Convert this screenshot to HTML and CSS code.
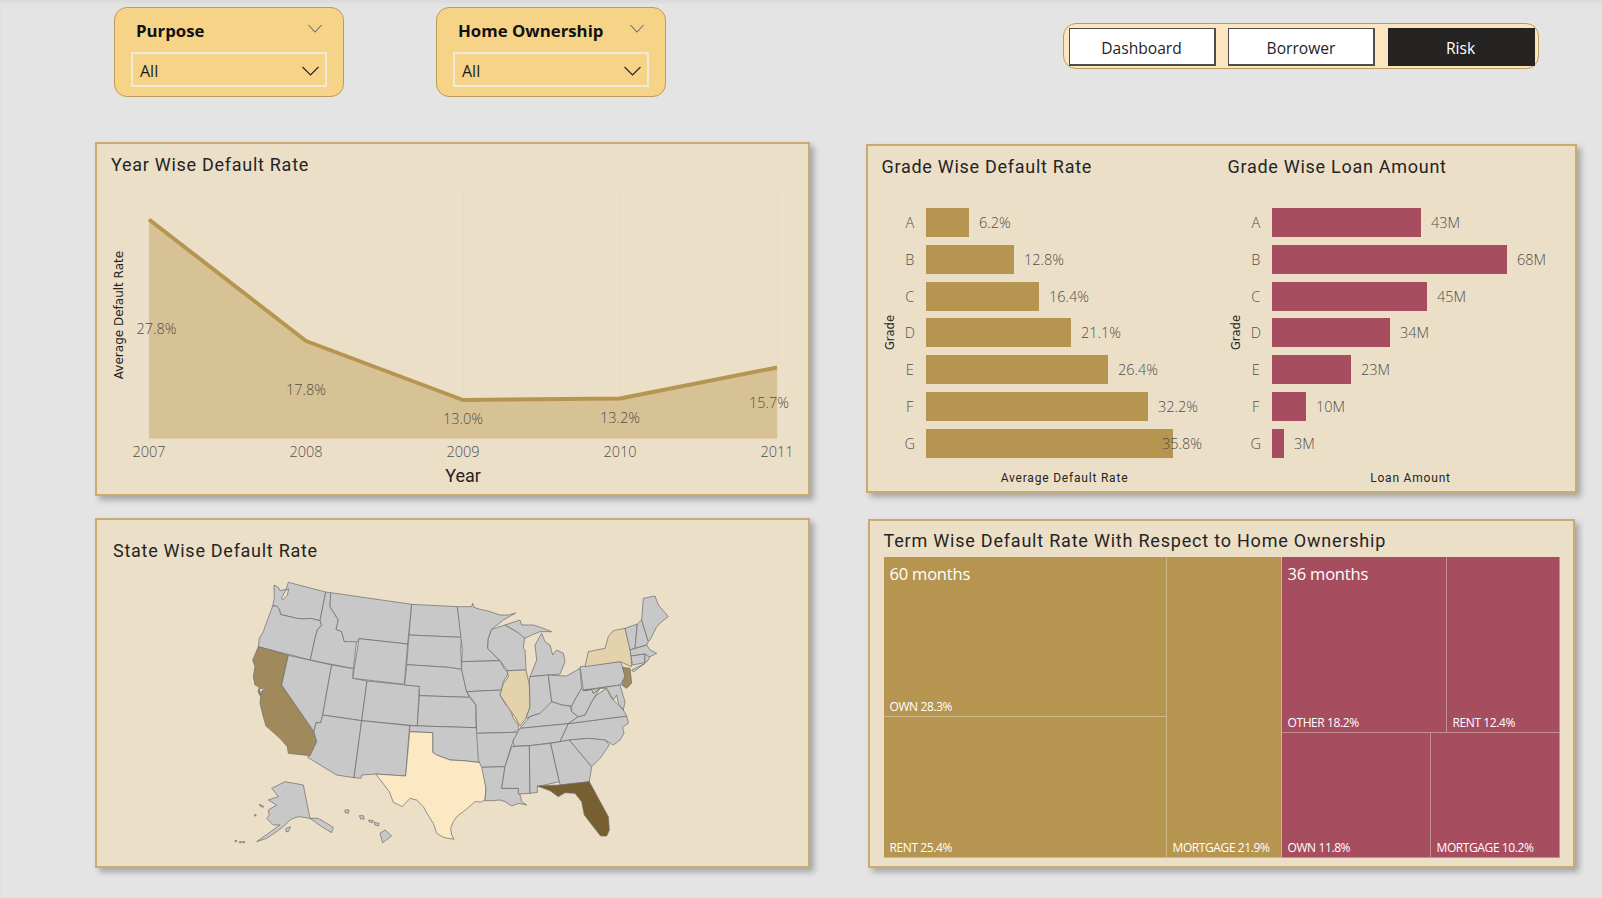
FILE: index.html
```html
<!DOCTYPE html>
<html lang="en">
<head>
<meta charset="utf-8">
<title>Risk</title>
<link rel="stylesheet" href="styles.css">
</head>
<body>
<div class="page">
  <header class="topbar">
    <div class="slicer">
      <div class="slicer-head"><span>Purpose</span>
        <svg class="chev-sm" viewBox="0 0 14 9"><path d="M.5 1 7 8l6.500-7"/></svg></div>
      <div class="slicer-box"><span>All</span>
        <svg class="chev" viewBox="0 0 17 10"><path d="M.5 1 8.500 9l8-8"/></svg></div>
    </div>
    <div class="slicer slicer-second">
      <div class="slicer-head"><span>Home Ownership</span>
        <svg class="chev-sm" viewBox="0 0 14 9"><path d="M.5 1 7 8l6.500-7"/></svg></div>
      <div class="slicer-box"><span>All</span>
        <svg class="chev" viewBox="0 0 17 10"><path d="M.5 1 8.500 9l8-8"/></svg></div>
    </div>
    <nav class="nav">
      <div class="nav-btn">Dashboard</div>
      <div class="nav-btn">Borrower</div>
      <div class="nav-btn nav-active">Risk</div>
    </nav>
  </header>

  <main class="board">
    <div class="col col-left">
      <section class="card card-year">
        <h2 class="title title-year">Year Wise Default Rate</h2>
        <svg class="line-chart" viewBox="98 180 709 313" width="709" height="313">
          <g class="grid">
            <path d="M148.500 195V438M305.500 195V438M462.500 195V438M619.500 195V438M776.500 195V438"/>
          </g>
          <path class="area" d="M148 219.500 305 341 462 400 619 398.500 776 367.500V438.500H148Z"/>
          <path class="line" d="M148 219.500 305 341 462 400 619 398.500 776 367.500"/>
          <text class="val" x="155.500" y="334">27.8%</text>
          <text class="val" x="305" y="395">17.8%</text>
          <text class="val" x="462" y="424">13.0%</text>
          <text class="val" x="619" y="423">13.2%</text>
          <text class="val" x="768" y="408">15.7%</text>
          <text class="val" x="148" y="457">2007</text>
          <text class="val" x="305" y="457">2008</text>
          <text class="val" x="462" y="457">2009</text>
          <text class="val" x="619" y="457">2010</text>
          <text class="val" x="776" y="457">2011</text>
          <text class="axis-year" x="462" y="482">Year</text>
          <text class="axis-y" transform="translate(122 315) rotate(-90)">Average Default Rate</text>
        </svg>
      </section>

      <section class="card card-state">
        <h2 class="title title-state">State Wise Default Rate</h2>
        <svg class="map" viewBox="0 0 1380 870" width="460" height="290">
          <g class="states">
            <path d="M132 45 145 52 150 62 168 58 175 37 287 66 270 152 240 145 222 147 200 145 180 140 152 134 148 118 140 108 128 108 133 85Z"/>
            <path class="hole" d="M166 62 176 56 172 76 158 90 155 84Z"/>
            <path d="M128 108 140 108 148 118 152 134 180 140 200 145 222 147 240 145 270 152 275 165 262 180 255 205 241 270 85 230 88 205 100 185 105 170Z"/>
            <path class="s-ca" d="M85 230 175 256 155 345 250 485 260 515 240 557 175 550 172 530 150 505 108 468 100 440 90 400 92 380 84 365 88 352 75 345 70 320 75 290 68 270Z"/>
            <path class="hole" d="M88 356 108 354 96 362 92 374Z"/>
            <path d="M175 256 305 285 278 435 272 458 258 458 252 485 155 345Z"/>
            <path d="M287 66 302 68 300 110 325 150 318 178 335 185 343 215 380 212 370 296 241 270 255 205 262 180 275 165 270 152Z"/>
            <path d="M302 68 545 103 533 222 387 206 383 215 343 215 335 185 318 178 325 150 300 110Z"/>
            <path d="M387 206 533 222 523 343 368 325Z"/>
            <path d="M305 285 370 296 368 325 411 333 395 452 278 435Z"/>
            <path d="M411 333 568 349 562 468 395 452Z"/>
            <path d="M278 435 395 452 372 623 320 615 233 562 240 557 260 515 252 485 258 458 272 458Z"/>
            <path d="M395 452 539 467 527 618 437 612 395 615 393 625 372 623Z"/>
            <path d="M545 103 682 110 695 202 537 195Z"/>
            <path d="M537 195 695 202 692 235 695 298 655 292 530 284Z"/>
            <path d="M530 284 655 292 695 298 710 365 718 382 568 377 568 349 524 345Z"/>
            <path d="M568 377 718 382 738 405 738 473 562 468Z"/>
            <path d="M539 467 738 473 745 490 755 578 700 572 660 570 620 555 608 547 608 488 539 485Z"/>
            <path class="s-tx" d="M539 485 608 488 608 547 620 555 660 570 700 572 755 578 762 610 768 655 765 690 752 696 735 695 712 715 700 725 682 738 670 755 662 775 665 795 672 808 640 802 620 790 610 760 594 735 580 710 560 690 540 685 517 710 490 697 478 665 455 635 437 612 527 618Z"/>
            <path d="M125 655 165 635 220 645 240 745 222 742 205 740 190 745 180 750 160 770 135 788 110 805 80 815 108 795 150 765 130 765 110 745 118 735 115 720 140 705 115 690 145 680Z"/>
            <path d="M240 745 265 745 290 760 310 772 305 788 292 780 275 770Z"/>
            <path d="M450 790 465 780 485 798 458 818Z"/>
            <path d="M345 720 357 720 355 730 345 728Z"/>
            <path d="M388 737 400 737 403 747 392 747Z"/>
            <path d="M416 750 430 752 428 758 418 756Z"/>
            <path d="M433 757 448 760 445 768 435 765Z"/>
            <path d="M168 775 182 770 175 785 168 785Z"/>
            <path d="M88 703 100 708 100 712 90 708Z"/>
            <path d="M15 811 20 811 20 815 15 815Z"/>
            <path d="M28 815 34 815 34 818 28 818Z"/>
            <path d="M38 815 44 815 44 818 38 818Z"/>
            <path d="M74 734 78 734 78 738 74 738Z"/>
          </g>
          <g class="states" transform="translate(660 0)">
            <path d="M22 110 65 110 68 100 72 112 90 118 110 122 130 128 150 135 175 135 197 129 160 150 125 178 115 205 113 235 130 252 150 272 35 275 37 240Z"/>
            <path d="M35 275 150 272 162 295 175 310 160 335 155 360 50 365 35 300Z"/>
            <path d="M50 365 155 360 150 375 165 400 182 420 190 445 205 465 205 480 190 487 80 490 78 405Z"/>
            <path d="M80 490 190 487 205 487 190 510 180 540 165 590 95 592 85 570Z"/>
            <path d="M95 592 165 590 155 655 205 655 215 695 230 705 205 700 185 708 165 695 150 690 125 692 105 692 108 655Z"/>
            <path d="M125 178 165 165 200 185 225 190 220 235 225 240 228 300 172 302 150 272 113 235 115 205Z"/>
            <path class="s-il" d="M172 302 228 300 238 345 240 410 228 445 210 468 195 440 180 420 150 375 160 340 175 322Z"/>
            <path d="M255 225 275 190 285 215 300 225 308 255 320 240 340 250 345 275 330 312 240 320 260 270Z"/>
            <path d="M165 165 210 150 215 165 250 165 280 175 305 185 270 185 245 195 225 205 200 185Z"/>
            <path d="M238 320 295 315 305 395 285 420 270 430 240 440 228 445 240 410Z"/>
            <path d="M295 315 350 318 390 295 395 355 380 380 365 408 335 405 305 395Z"/>
            <path d="M210 475 240 440 270 430 305 395 335 405 360 408 365 425 385 440 355 461Z"/>
            <path d="M190 510 210 475 355 461 330 515 240 527 190 528Z"/>
            <path d="M355 461 530 438 535 460 518 472 522 490 510 510 490 525 465 510 415 505 360 510 330 515Z"/>
            <path d="M355 461 385 440 405 435 425 395 440 375 470 355 485 385 500 400 520 420 530 438Z"/>
            <path d="M365 408 380 380 395 355 400 362 425 358 430 370 450 355 425 395 405 435 385 440 365 425Z"/>
            <path d="M390 290 510 275 530 310 510 345 400 360Z"/>
            <path class="s-ny" d="M405 290 415 245 465 235 475 200 490 182 525 175 543 245 545 290 510 275Z"/>
            <path class="s-nj" d="M517 292 540 295 545 340 530 355 515 345 525 320Z"/>
            <path d="M400 362 510 345 525 395 520 420 505 400 500 375 490 390 470 355 450 355 430 370 425 358Z"/>
            <path d="M525 175 562 162 555 235 540 240Z"/>
            <path d="M562 162 575 150 595 215 590 225 555 235Z"/>
            <path d="M575 150 580 85 615 78 625 105 655 140 635 155 620 170 600 210 595 215Z"/>
            <path d="M540 240 590 225 600 240 620 250 590 265 585 252 543 258Z"/>
            <path d="M543 258 585 252 585 278 547 285Z"/>
            <path d="M585 252 600 262 590 276 585 278Z"/>
            <path d="M545 300 585 280 550 306Z"/>
            <path d="M185 530 238 527 240 670 205 672 205 655 155 655 165 590Z"/>
            <path d="M238 527 302 520 328 635 262 650 262 667 240 670Z"/>
            <path d="M302 520 358 510 425 590 418 635 330 645 328 635Z"/>
            <path d="M358 510 415 505 465 510 478 525 450 565 425 590Z"/>
            <path class="s-fl" d="M262 648 330 645 418 635 445 685 475 740 478 780 470 798 452 798 430 770 403 735 395 695 375 670 345 668 325 680 300 662Z"/>
          </g>
        </svg>
      </section>
    </div>

    <div class="col col-right">
      <section class="card card-grade">
        <div class="grade-col grade-col-a">
          <h2 class="title">Grade Wise Default Rate</h2>
          <div class="bars-wrap">
            <div class="grade-axis">Grade</div>
            <div class="bars">
              <div class="row"><span class="cat">A</span><div class="bar bar-gold" style="width:43px"></div><span class="v">6.2%</span></div>
              <div class="row"><span class="cat">B</span><div class="bar bar-gold" style="width:88px"></div><span class="v">12.8%</span></div>
              <div class="row"><span class="cat">C</span><div class="bar bar-gold" style="width:113px"></div><span class="v">16.4%</span></div>
              <div class="row"><span class="cat">D</span><div class="bar bar-gold" style="width:145px"></div><span class="v">21.1%</span></div>
              <div class="row"><span class="cat">E</span><div class="bar bar-gold" style="width:182px"></div><span class="v">26.4%</span></div>
              <div class="row"><span class="cat">F</span><div class="bar bar-gold" style="width:222px"></div><span class="v">32.2%</span></div>
              <div class="row"><span class="cat">G</span><div class="bar bar-gold" style="width:247px"></div><span class="v v-over">35.8%</span></div>
            </div>
          </div>
          <div class="axis-x">Average Default Rate</div>
        </div>
        <div class="grade-col grade-col-b">
          <h2 class="title">Grade Wise Loan Amount</h2>
          <div class="bars-wrap">
            <div class="grade-axis">Grade</div>
            <div class="bars">
              <div class="row"><span class="cat">A</span><div class="bar bar-rose" style="width:149px"></div><span class="v">43M</span></div>
              <div class="row"><span class="cat">B</span><div class="bar bar-rose" style="width:235px"></div><span class="v">68M</span></div>
              <div class="row"><span class="cat">C</span><div class="bar bar-rose" style="width:155px"></div><span class="v">45M</span></div>
              <div class="row"><span class="cat">D</span><div class="bar bar-rose" style="width:118px"></div><span class="v">34M</span></div>
              <div class="row"><span class="cat">E</span><div class="bar bar-rose" style="width:79px"></div><span class="v">23M</span></div>
              <div class="row"><span class="cat">F</span><div class="bar bar-rose" style="width:34px"></div><span class="v">10M</span></div>
              <div class="row"><span class="cat">G</span><div class="bar bar-rose" style="width:12px"></div><span class="v">3M</span></div>
            </div>
          </div>
          <div class="axis-x">Loan Amount</div>
        </div>
      </section>

      <section class="card card-term">
        <h2 class="title title-term">Term Wise Default Rate With Respect to Home Ownership</h2>
        <div class="treemap">
          <div class="tm-group tm-gold">
            <div class="tm-stack">
              <div class="cell cell-own60"><span class="term">60 months</span><span class="lbl">OWN 28.3%</span></div>
              <div class="cell cell-rent60"><span class="lbl">RENT 25.4%</span></div>
            </div>
            <div class="cell cell-mort60"><span class="lbl">MORTGAGE 21.9%</span></div>
          </div>
          <div class="tm-group tm-rose">
            <div class="tm-row tm-row-top">
              <div class="cell cell-other"><span class="term">36 months</span><span class="lbl">OTHER 18.2%</span></div>
              <div class="cell cell-grow"><span class="lbl">RENT 12.4%</span></div>
            </div>
            <div class="tm-row tm-row-bot">
              <div class="cell cell-own36"><span class="lbl">OWN 11.8%</span></div>
              <div class="cell cell-grow"><span class="lbl">MORTGAGE 10.2%</span></div>
            </div>
          </div>
        </div>
      </section>
    </div>
  </main>
</div>
</body>
</html>
```
FILE: styles.css
```css
* { box-sizing: border-box; }
html, body { margin: 0; padding: 0; }
body {
  width: 1602px;
  height: 898px;
  overflow: hidden;
  background: #e4e4e4;
  font-family: "Open Sans", "Liberation Sans", sans-serif;
  color: #252423;
}
.page {
  width: 1602px;
  height: 898px;
  box-shadow: inset 0 3px 3px rgba(0,0,0,.04);
}

/* top row */
.topbar {
  height: 142px;
  padding: 7px 0 0 114px;
  display: flex;
  align-items: flex-start;
}
.slicer {
  width: 230px;
  height: 90px;
  background: #f6d387;
  border: 1px solid #bd9c5b;
  border-radius: 13px;
  padding: 0 17px;
}
.slicer-second { margin-left: 92px; }
.slicer-head {
  height: 44px;
  padding: 0 4px 0 4px;
  display: flex;
  align-items: center;
  justify-content: space-between;
  font-size: 16.8px;
  font-weight: 700;
  color: #111;
}
.chev-sm { width: 14px; height: 9px; margin-top: -4px; }
.chev-sm path { fill: none; stroke: #6b6b6b; stroke-width: 1.1; }
.slicer-box {
  height: 35px;
  margin-left: -1px;
  width: 196px;
  border: 2px solid #efe9da;
  padding: 2px 6px 0 7px;
  display: flex;
  align-items: center;
  justify-content: space-between;
  font-size: 16px;
  color: #1c1c1c;
}
.chev { width: 17px; height: 10px; }
.chev path { fill: none; stroke: #252423; stroke-width: 1.1; }
.nav {
  margin: 16px 0 0 397px;
  width: 476px;
  height: 46px;
  background: #fbe6bf;
  border: 1px solid #bd9c5b;
  border-radius: 13px;
  padding: 4px 3px 4px 4.5px;
  display: flex;
  gap: 12.5px;
}
.nav-btn {
  width: 147px;
  height: 38px;
  padding-top: 2px;
  background: #fff;
  border: 1px solid #4d4d4d;
  border-bottom-width: 2px;
  border-right-width: 2px;
  display: flex;
  align-items: center;
  justify-content: center;
  font-size: 15.6px;
}
.nav-active { background: #252423; color: #fff; border-color: #252423; }

/* board */
.board { display: flex; padding-left: 95px; }
.col { display: flex; flex-direction: column; }
.col-left { width: 715px; gap: 23px; }
.col-right { width: 711px; margin-left: 56px; padding-top: 2px; gap: 26px; align-items: flex-start; }
.card {
  background: #ecdfc8;
  border: 2px solid #c9ab6f;
  box-shadow: 4px 4px 6px rgba(0,0,0,.28);
}
.title {
  margin: 0;
  font-family: Roboto, "Liberation Sans", sans-serif;
  font-size: 18px;
  font-weight: 400;
  letter-spacing: .72px;
  color: #252423;
  line-height: 24px;
}

/* year */
.card-year { width: 715px; height: 354px; }
.title-year { height: 36px; padding: 9px 0 0 14px; }
.line-chart { display: block; margin-left: 1.500px; }
.grid path { stroke: #d8ccbb; stroke-width: 1; stroke-dasharray: 1 3; fill: none; }
.area { fill: #d7c295; }
.line { fill: none; stroke: #b69550; stroke-width: 4; stroke-linejoin: round; }
.val {
  font-family: "Open Sans", sans-serif;
  font-size: 14.5px;
  font-weight: 300;
  fill: #504e4c;
  text-anchor: middle;
}
.axis-year {
  font-family: Roboto, sans-serif;
  font-size: 18px;
  fill: #252423;
  text-anchor: middle;
}
.axis-y {
  font-family: "DejaVu Sans", sans-serif;
  font-size: 12px;
  fill: #252423;
  text-anchor: middle;
}

/* state */
.col-left .card-state { margin-top: -1px; }
.card-state { width: 715px; height: 350px; }
.title-state { height: 50px; padding: 19px 0 0 16px; }
.map { display: block; margin-left: 133px; }
.states path { fill: #c8c8c8; stroke: #6f6f6f; stroke-width: 2.2; stroke-linejoin: round; }
.states .s-ca, .states .s-nj { fill: #a08a5c; }
.states .s-fl { fill: #775f31; }
.states .s-il, .states .s-ny { fill: #e3d2ab; }
.states .s-tx { fill: #fce8c2; }
.states .hole { fill: #ecdfc8; }

/* grade */
.card-grade { width: 711px; height: 349px; display: flex; }
.grade-col-a { width: 338px; padding-left: 13.500px; }
.grade-col-b { width: 369px; padding-left: 21.500px; }
.grade-col .title { height: 62px; padding-top: 9px; }
.bars-wrap { display: flex; margin-left: 2px; }
.grade-col-b .bars-wrap { margin-left: 2px; }
.grade-axis {
  width: 12px;
  align-self: center;
  writing-mode: vertical-rl;
  transform: rotate(180deg);
  font-family: "DejaVu Sans", sans-serif;
  font-size: 11.5px;
  line-height: 12px;
  text-align: center;
  color: #252423;
}
.bars { display: flex; flex-direction: column; gap: 7.83px; }
.row { height: 29px; display: flex; align-items: center; }
.cat {
  width: 30.500px;
  padding-right: 2px;
  text-align: center;
  font-size: 14.5px;
  font-weight: 300;
  color: #504e4c;
}
.bar { height: 29px; }
.bar-gold { background: #b69550; }
.bar-rose { background: #a64d5f; }
.v {
  margin-left: 10px;
  font-size: 14.5px;
  font-weight: 300;
  color: #504e4c;
  white-space: nowrap;
}
.v-over { margin-left: -11px; }
.axis-x {
  width: 300px;
  margin: 11px 0 0 33px;
  font-family: Roboto, sans-serif;
  font-size: 12px;
  letter-spacing: .8px;
  line-height: 18px;
  text-align: center;
  color: #252423;
}

/* term */
.card-term { width: 707px; height: 349px; margin-left: 2px; }
.title-term { height: 36px; padding: 8px 0 0 13.500px; letter-spacing: .79px; }
.treemap { display: flex; height: 301px; width: 676px; margin-left: 13.500px; }
.tm-group { display: flex; color: #fff; }
.tm-gold { width: 398px; background: #b69550; }
.tm-rose { flex: 1; flex-direction: column; background: #a64d5f; }
.tm-stack { width: 283px; display: flex; flex-direction: column; }
.cell {
  display: flex;
  flex-direction: column;
  justify-content: space-between;
  padding: 6px 6px 1px;
  border: solid rgba(236,223,200,.45);
  border-width: 0 1px 1px 0;
  font-size: 12px;
  letter-spacing: -.4px;
}
.cell-own60 { height: 160px; }
.cell-rent60 { flex: 1; justify-content: flex-end; }
.cell-mort60 { flex: 1; justify-content: flex-end; }
.tm-row { display: flex; }
.tm-row-top { height: 176px; }
.tm-row-bot { flex: 1; }
.cell-other { width: 165px; }
.cell-own36 { width: 149px; justify-content: flex-end; }
.cell-grow { flex: 1; justify-content: flex-end; }
.term { font-size: 16.5px; line-height: 22px; letter-spacing: -.2px; }
.lbl { line-height: 16px; white-space: nowrap; }
```
